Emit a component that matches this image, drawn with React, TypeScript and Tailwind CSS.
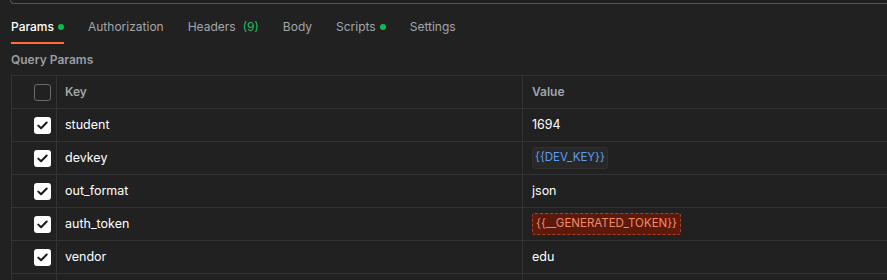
import React from "react";

const font = { fontFamily: "Inter, 'Noto Sans', sans-serif" };

function Check({ checked }: { checked: boolean }) {
  if (!checked)
    return <div className="w-[17px] h-[17px] rounded-[3px] border border-[#6b6b6b]" />;
  return (
    <div className="w-[17px] h-[17px] rounded-[3px] bg-white flex items-center justify-center">
      <svg width="11" height="9" viewBox="0 0 11 9" fill="none">
        <path d="M1.3 4.6 L4.1 7.3 L9.7 1.5" stroke="#1a1a1a" strokeWidth="2" strokeLinecap="round" strokeLinejoin="round" />
      </svg>
    </div>
  );
}

type Row = { k: string; v: React.ReactNode };

const rows: Row[] = [
  { k: "student", v: <span>1694</span> },
  {
    k: "devkey",
    v: (
      <span className="text-[11.5px] px-[2px] py-[1px] rounded-[3px] bg-[#282828] border border-[#303030] text-[#5b9cf5]">{"{{DEV_KEY}}"}</span>
    ),
  },
  { k: "out_format", v: <span>json</span> },
  {
    k: "auth_token",
    v: (
      <span className="text-[11.5px] px-[3px] py-[1px] rounded-[3px] bg-[#5c1a0c] border border-dashed border-[#a8402a] text-[#f28a6a]">
        {"{{__GENERATED_TOKEN}}"}
      </span>
    ),
  },
  { k: "vendor", v: <span>edu</span> },
];

export default function App() {
  const tabs = [
    { t: "Params", active: true, dot: true },
    { t: "Authorization" },
    { t: "Headers", count: "(9)" },
    { t: "Body" },
    { t: "Scripts", dot: true },
    { t: "Settings" },
  ];
  return (
    <div className="w-[887px] h-[280px] bg-[#212121] overflow-hidden text-[12px]" style={font}>
      <div className="ml-[10px] h-[4px] border-b border-l border-[#555] rounded-bl-[4px]" />
      <div className="flex gap-[24px] pl-[11px] pt-[13px]">
        {tabs.map((tab) => (
          <div key={tab.t} className="flex flex-col">
            <div
              className={
                "flex items-center h-[20px] " +
                (tab.active ? "text-white font-medium" : "text-[#a3a6ab] font-normal")
              }
            >
              {tab.t}
              {tab.count && <span className="ml-[7px] text-[#1fbf5f]">{tab.count}</span>}
              {tab.dot && <span className="ml-[4px] w-[6px] h-[6px] rounded-full bg-[#0cbb52]" />}
            </div>
            <div className={"mt-[5px] h-[2px] " + (tab.active ? "bg-[#ff6c37]" : "bg-transparent")} />
          </div>
        ))}
      </div>
      <div className="pl-[11px] mt-[8px] h-[16px] leading-[16px] font-semibold text-[#9a9ea4]">Query Params</div>
      <div className="ml-[11px] mt-[7px] border-l border-t border-[#333]">
        <div className="grid grid-cols-[45px_466px_1fr] h-[33px] border-b border-[#333]">
          <div className="border-r border-[#333] flex items-center pl-[22px]">
            <Check checked={false} />
          </div>
          <div className="border-r border-[#333] flex items-center pl-[8px] font-semibold text-[#a3a6ab]">Key</div>
          <div className="flex items-center pl-[9px] font-semibold text-[#a3a6ab]">Value</div>
        </div>
        {rows.map((r) => (
          <div key={r.k} className="grid grid-cols-[45px_466px_1fr] h-[33px] border-b border-[#333] text-white text-[12.5px]">
            <div className="border-r border-[#333] flex items-center pl-[22px]">
              <Check checked />
            </div>
            <div className="border-r border-[#333] flex items-center pl-[8px]">{r.k}</div>
            <div className="flex items-center pl-[9px]">{r.v}</div>
          </div>
        ))}
        <div className="grid grid-cols-[45px_466px_1fr] h-[33px]">
          <div className="border-r border-[#333]" />
          <div className="border-r border-[#333]" />
          <div />
        </div>
      </div>
    </div>
  );
}
